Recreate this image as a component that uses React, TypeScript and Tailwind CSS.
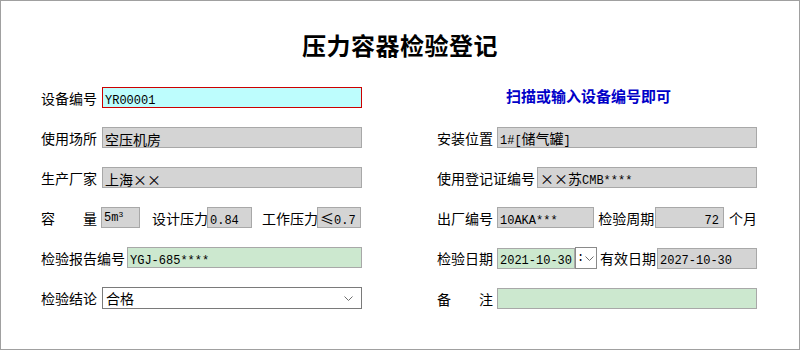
import React from 'react';

const CJK = '"Noto Sans CJK SC", "Noto Sans", sans-serif';
const MONO = '"Liberation Mono", "Noto Sans CJK SC", monospace';

// split a value into CJK runs (wider glyphs) and ascii runs (mono)
const Val = ({ text }: { text: string }) => {
    const parts = text.match(/[\u4e00-\u9fff×≤]+|[^\u4e00-\u9fff×≤]+/g) || [];
    return (
        <span className="leading-none">
            {parts.map((p, i) =>
                /[\u4e00-\u9fff×≤]/.test(p) ? (
                    <span key={i} className="text-[14px]" style={{ fontFamily: CJK }}>
                        {p}
                    </span>
                ) : (
                    <span key={i} className="text-[12px]" style={{ fontFamily: MONO }}>
                        {p}
                    </span>
                )
            )}
        </span>
    );
};

const Box = ({
    text = '',
    className = '',
    right = false,
}: {
    text?: string;
    className?: string;
    right?: boolean;
}) => (
    <div
        className={
            'h-[21px] flex items-center border whitespace-nowrap overflow-hidden leading-none text-black ' +
            (right ? 'justify-end pr-[4px] ' : 'pl-[2px] ') +
            className
        }
    >
        <Val text={text} />
    </div>
);

const gray = 'bg-[#d4d4d4] border-[#a8a8a8]';
const green = 'bg-[#cce8cf] border-[#a8a8a8]';

const Label = ({ children, className = '' }: { children: React.ReactNode; className?: string }) => (
    <div className={'text-[14px] leading-none text-black whitespace-nowrap shrink-0 ' + className}>{children}</div>
);

const Chevron = ({ className = '' }: { className?: string }) => (
    <svg width="9" height="5" viewBox="0 0 9 5" className={className}>
        <path d="M0.5 0.5 L4.5 4.5 L8.5 0.5" fill="none" stroke="#6e6e6e" strokeWidth="1" />
    </svg>
);

export default function App() {
    return (
        <div
            className="w-[800px] h-[350px] border border-[#a0a0a0] bg-white overflow-hidden"
            style={{ fontFamily: CJK }}
        >
            <div className="h-[86px] pt-[32px] text-center">
                <h1 className="text-[24px] leading-[24px] font-bold tracking-[0.5px] text-black">压力容器检验登记</h1>
            </div>

            <div className="flex pl-[40px] gap-[75px]">
                {/* left column */}
                <div className="w-[321px] flex flex-col gap-[19px]">
                    <div className="flex items-center">
                        <Label className="w-[61px]">设备编号</Label>
                        <Box text="YR00001" className="flex-1 bg-[#bdfdfd] border-[#cc0000]" />
                    </div>
                    <div className="flex items-center">
                        <Label className="w-[61px]">使用场所</Label>
                        <Box text="空压机房" className={'flex-1 ' + gray} />
                    </div>
                    <div className="flex items-center">
                        <Label className="w-[61px]">生产厂家</Label>
                        <Box text="上海××" className={'flex-1 ' + gray} />
                    </div>
                    <div className="flex items-center">
                        <Label className="w-[60px] flex justify-between pr-[4px]">
                            <span>容</span>
                            <span>量</span>
                        </Label>
                        <div className={'w-[39px] h-[21px] flex items-center border pl-[2px] leading-none ' + gray}>
                            <span className="text-[12px] leading-none" style={{ fontFamily: MONO }}>
                                5m<sup className="text-[8px]">3</sup>
                            </span>
                        </div>
                        <Label className="ml-[12px] w-[55px]">设计压力</Label>
                        <Box text="0.84" className={'w-[45px] ' + gray} />
                        <Label className="ml-[10px] w-[55px]">工作压力</Label>
                        <Box text="≤0.7" className={'w-[44px] ' + gray} />
                    </div>
                    <div className="flex items-center">
                        <Label className="w-[86px]">检验报告编号</Label>
                        <Box text="YGJ-685****" className={'flex-1 ' + green} />
                    </div>
                    <div className="flex items-center">
                        <Label className="w-[61px]">检验结论</Label>
                        <div className="flex-1 h-[22px] flex items-center justify-between border border-[#7a7a7a] bg-white pl-[3px] pr-[8px]">
                            <span className="text-[14px] leading-none">合格</span>
                            <Chevron />
                        </div>
                    </div>
                </div>

                {/* right column */}
                <div className="w-[320px] flex flex-col gap-[19px]">
                    <div className="h-[21px] flex items-center pl-[69px]">
                        <span className="text-[15px] leading-none font-bold text-[#0000c8] -mt-[4px]">
                            扫描或输入设备编号即可
                        </span>
                    </div>
                    <div className="flex items-center">
                        <Label className="w-[60px]">安装位置</Label>
                        <Box text="1#[储气罐]" className={'flex-1 ' + gray} />
                    </div>
                    <div className="flex items-center">
                        <Label className="w-[100px]">使用登记证编号</Label>
                        <Box text="××苏CMB****" className={'flex-1 ' + gray} />
                    </div>
                    <div className="flex items-center">
                        <Label className="w-[60px]">出厂编号</Label>
                        <Box text="10AKA***" className={'w-[99px] ' + gray} />
                        <Label className="ml-[4px] w-[57px]">检验周期</Label>
                        <Box text="72" right className={'w-[70px] ' + gray} />
                        <Label className="ml-[5px]">个月</Label>
                    </div>
                    <div className="flex items-center">
                        <Label className="w-[60px]">检验日期</Label>
                        <Box text="2021-10-30" className={'w-[78px] ' + green} />
                        <div className="w-[22px] h-[22px] flex items-center border border-[#8a8a8a] bg-white overflow-hidden">
                            <span className="text-[12px] leading-none pl-[1px]" style={{ fontFamily: MONO }}>:</span>
                            <Chevron className="ml-[1px]" />
                        </div>
                        <Label className="ml-[3px] w-[57px]">有效日期</Label>
                        <Box text="2027-10-30" className={'w-[100px] ' + gray} />
                    </div>
                    <div className="flex items-center">
                        <Label className="w-[56px] flex justify-between">
                            <span>备</span>
                            <span>注</span>
                        </Label>
                        <Box className={'ml-[4px] flex-1 ' + green} />
                    </div>
                </div>
            </div>
        </div>
    );
}
